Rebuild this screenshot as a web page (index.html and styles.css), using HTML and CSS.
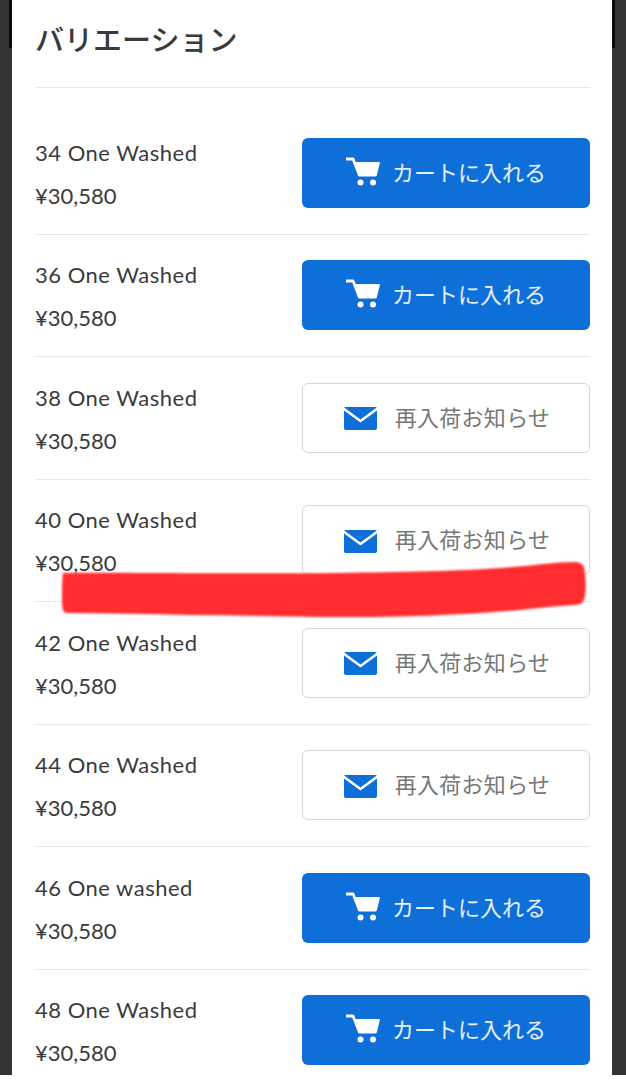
FILE: index.html
```html
<!DOCTYPE html>
<html lang="ja">
<head>
    <meta charset="UTF-8">
    <meta name="viewport" content="width=device-width, initial-scale=1.0">
    <title>バリエーション</title>
    <link rel="stylesheet" href="styles.css">
</head>
<body>
    <svg width="0" height="0" class="defs">
        <symbol id="cart" viewBox="0 0 35 30">
            <path d="M1 1.500h6.600c1 0 1.700.5 2 1.500l1 3h23.400c.7 0 1 .5.8 1.200l-3 12.300c-.2.7-.7 1.100-1.400 1.100H14.500c-.8 0-1.300-.4-1.500-1.100L7.200 4.500H1z" fill="#fff"/>
            <circle cx="15.500" cy="26.500" r="3" fill="#fff"/>
            <circle cx="28" cy="26.500" r="3" fill="#fff"/>
        </symbol>
        <symbol id="mail" viewBox="0 0 33 23">
            <path d="M1.500 0h30c.6 0 1 .2 1.300.5L16.500 12.500.2.500C.5.200.9 0 1.500 0z" fill="#0f6fd8"/>
            <path d="M0 3.500l16.500 12L33 3.500V21c0 1.200-.8 2-2 2H2c-1.200 0-2-.8-2-2z" fill="#0f6fd8"/>
        </symbol>
    </svg>

    <main class="card">
        <h2 class="title">バリエーション</h2>
        <ul class="variations">
            <li class="row">
                <div class="info"><p class="name">34 One Washed</p><p>¥30,580</p></div>
                <a class="btn btn-cart"><svg class="icon-cart"><use href="#cart"/></svg><span>カートに入れる</span></a>
            </li>
            <li class="row">
                <div class="info"><p class="name">36 One Washed</p><p>¥30,580</p></div>
                <a class="btn btn-cart"><svg class="icon-cart"><use href="#cart"/></svg><span>カートに入れる</span></a>
            </li>
            <li class="row">
                <div class="info"><p class="name">38 One Washed</p><p>¥30,580</p></div>
                <a class="btn btn-notify"><svg class="icon-mail"><use href="#mail"/></svg><span>再入荷お知らせ</span></a>
            </li>
            <li class="row">
                <div class="info"><p class="name">40 One Washed</p><p>¥30,580</p></div>
                <a class="btn btn-notify"><svg class="icon-mail"><use href="#mail"/></svg><span>再入荷お知らせ</span></a>
            </li>
            <li class="row">
                <div class="info"><p class="name">42 One Washed</p><p>¥30,580</p></div>
                <a class="btn btn-notify"><svg class="icon-mail"><use href="#mail"/></svg><span>再入荷お知らせ</span></a>
            </li>
            <li class="row">
                <div class="info"><p class="name">44 One Washed</p><p>¥30,580</p></div>
                <a class="btn btn-notify"><svg class="icon-mail"><use href="#mail"/></svg><span>再入荷お知らせ</span></a>
            </li>
            <li class="row">
                <div class="info"><p class="name">46 One washed</p><p>¥30,580</p></div>
                <a class="btn btn-cart"><svg class="icon-cart"><use href="#cart"/></svg><span>カートに入れる</span></a>
            </li>
            <li class="row">
                <div class="info"><p class="name">48 One Washed</p><p>¥30,580</p></div>
                <a class="btn btn-cart"><svg class="icon-cart"><use href="#cart"/></svg><span>カートに入れる</span></a>
            </li>
        </ul>
    </main>

    <!-- red marker scribble on top of the screenshot -->
    <svg class="scribble" width="626" height="80" viewBox="0 0 626 80">
        <path d="M63 18C100 17 200 19 340 18C400 17 460 16 500 13C530 11 555 7 575 7C583 7 585 12 585 20C586 28 586 34 585 41C584 47 581 50 575 50C550 51 520 56 480 58C420 62 370 62 340 62C290 62 240 60 190 60C150 59 110 58 68 58C63 58 62 55 62 45C62 35 62 25 63 18Z" fill="#ff2d30"/>
    </svg>
    <div class="bottom-strip"></div>
</body>
</html>
```

FILE: styles.css
```css
html, body {
    margin: 0;
    height: 1080px;
    overflow: hidden;
}
body {
    position: relative;
    background: #333;
    font-family: Lato, "Noto Sans CJK JP", sans-serif;
    color: #3b3b3b;
}
.defs {
    position: absolute;
}
.card {
    position: relative;
    width: 555px;
    height: 1080px;
    margin-left: 12px;
    padding: 0 22px 0 23px;
    background: #fff;
}
/* black ticks beside the card at the very top */
.card::before,
.card::after {
    content: "";
    position: absolute;
    top: 0;
    width: 3px;
    height: 48px;
    background: #0c0c0c;
}
.card::before {
    left: -3px;
}
.card::after {
    right: -3px;
}
.title {
    margin: 0;
    height: 88px;
    padding-top: 18px;
    box-sizing: border-box;
    border-bottom: 1px solid #e8e8e8;
    font-family: "Noto Sans CJK JP", sans-serif;
    font-size: 29px;
    font-weight: 500;
    line-height: 40px;
    color: #3a3a3a;
}
.variations {
    list-style-type: none;
    margin: 0;
    padding: 24px 0 0;
}
.row {
    display: flex;
    justify-content: space-between;
    align-items: center;
    height: 69.5px;
    padding: 26px 0;
    border-bottom: 1px solid #e8e8e8;
}
.row:last-child {
    border-bottom: 0;
}
.info {
    padding-top: 2px;
    font-size: 22px;
    line-height: 43px;
}
.info p {
    margin: 0;
}
.info .name {
    letter-spacing: .5px;
}
.btn {
    display: flex;
    justify-content: center;
    align-items: center;
    width: 288px;
    height: 70px;
    box-sizing: border-box;
    border-radius: 6px;
    font-family: "Noto Sans CJK JP", sans-serif;
    font-size: 22px;
}
.btn span {
    margin-bottom: 4px;
}
.btn-cart {
    padding-right: 1px;
    background: #0f6fd8;
    color: #e6f0fb;
}
.btn-notify {
    padding-left: 2px;
    background: #fff;
    border: 1px solid #d6d6d6;
    color: #777;
    letter-spacing: .3px;
}
.icon-cart {
    width: 35px;
    height: 30px;
    margin-right: 12px;
    margin-bottom: 4px;
}
.icon-mail {
    width: 33px;
    height: 23px;
    margin-right: 18px;
    margin-top: 2px;
}
.scribble {
    position: absolute;
    left: 0;
    top: 555px;
    filter: blur(1px);
}
.bottom-strip {
    position: absolute;
    left: 0;
    right: 0;
    top: 1075px;
    height: 5px;
    background: #fff;
}
```
